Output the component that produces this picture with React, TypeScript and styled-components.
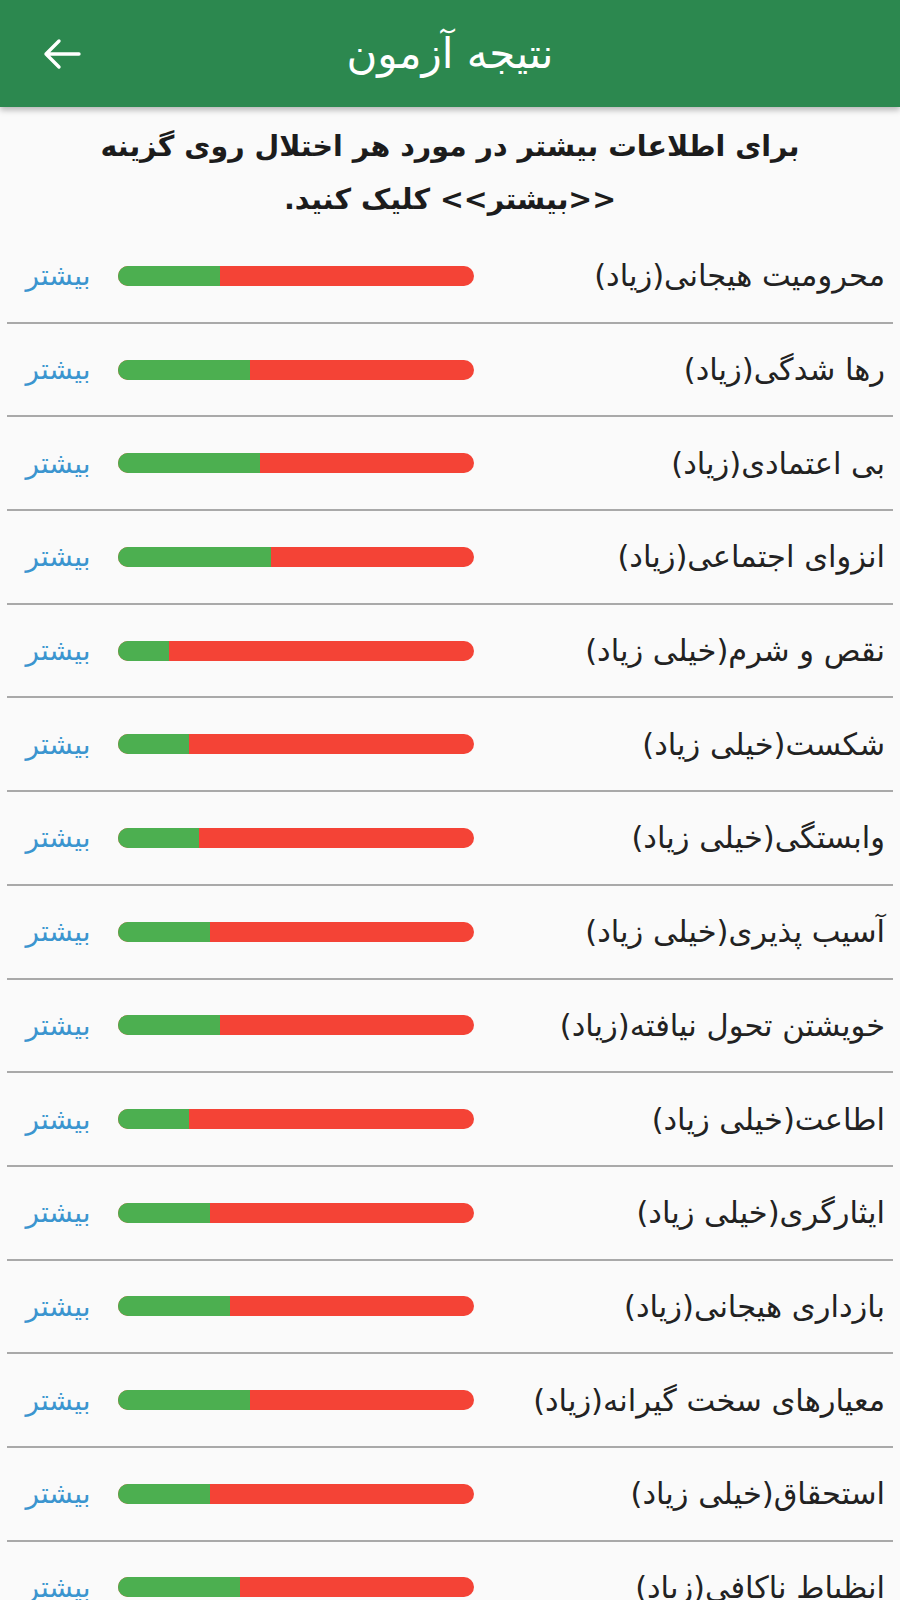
import React from 'react'
import styled, { createGlobalStyle } from 'styled-components'

const GlobalStyle = createGlobalStyle`
  html, body {
    margin: 0;
    padding: 0;
    background: #fafafa;
  }
  body {
    font-family: 'DejaVu Sans', 'Noto Sans', sans-serif;
  }
`

const Page = styled.div`
  width: 900px;
  min-height: 1600px;
  background: #fafafa;
  overflow: hidden;
`

const AppBar = styled.header`
  position: relative;
  z-index: 2;
  height: 107px;
  display: grid;
  grid-template-columns: 1fr auto 1fr;
  align-items: center;
  background: #2c884f;
  box-shadow: 0 3px 6px rgba(0, 0, 0, 0.28);
`

const BackButton = styled.button`
  justify-self: start;
  margin-left: 42px;
  padding: 0;
  border: none;
  background: transparent;
  display: flex;
  align-items: center;
  cursor: pointer;
`

const Title = styled.h1`
  margin: 0;
  color: #ffffff;
  font-size: 42px;
  font-weight: 400;
  direction: rtl;
`

const Intro = styled.p`
  margin: 0;
  padding: 13px 30px 4px;
  direction: rtl;
  text-align: center;
  font-size: 28.5px;
  font-weight: 700;
  line-height: 53px;
  color: #1c1c1c;
`

const List = styled.ul`
  list-style: none;
  margin: 0;
  padding: 0 7px;
`

const Row = styled.li`
  height: 91.7px;
  display: grid;
  grid-template-columns: 1fr 356px 70px;
  column-gap: 25px;
  align-items: center;
  direction: rtl;
  padding: 0 8px 0 16px;
  border-bottom: 2px solid #a9a9a9;
`

const Label = styled.span`
  font-size: 30.5px;
  color: #222222;
  white-space: nowrap;
  text-align: right;
`

const Bar = styled.div`
  direction: ltr;
  height: 20px;
  border-radius: 10px;
  background: #f44336;
  overflow: hidden;
  display: flex;
`

const Fill = styled.div`
  height: 100%;
  background: #4caf50;
`

const MoreLink = styled.a`
  font-size: 28px;
  color: #3b95cf;
  text-decoration: none;
  text-align: center;
  white-space: nowrap;
  cursor: pointer;
`

const items: { label: string; score: number }[] = [
  { label: 'محرومیت هیجانی(زیاد)', score: 10 },
  { label: 'رها شدگی(زیاد)', score: 13 },
  { label: 'بی اعتمادی(زیاد)', score: 14 },
  { label: 'انزوای اجتماعی(زیاد)', score: 15 },
  { label: 'نقص و شرم(خیلی زیاد)', score: 5 },
  { label: 'شکست(خیلی زیاد)', score: 7 },
  { label: 'وابستگی(خیلی زیاد)', score: 8 },
  { label: 'آسیب پذیری(خیلی زیاد)', score: 9 },
  { label: 'خویشتن تحول نیافته(زیاد)', score: 10 },
  { label: 'اطاعت(خیلی زیاد)', score: 7 },
  { label: 'ایثارگری(خیلی زیاد)', score: 9 },
  { label: 'بازداری هیجانی(زیاد)', score: 11 },
  { label: 'معیارهای سخت گیرانه(زیاد)', score: 13 },
  { label: 'استحقاق(خیلی زیاد)', score: 9 },
  { label: 'انظباط ناکافی(زیاد)', score: 12 },
]

const MAX_SCORE = 35

function BackArrow() {
  return (
    <svg width="40" height="32" viewBox="0 0 40 32" fill="none">
      <path
        d="M4 16H37M4 16L17 3M4 16L17 29"
        stroke="#ffffff"
        strokeWidth="3.4"
        strokeLinecap="round"
        strokeLinejoin="round"
      />
    </svg>
  )
}

export default function App() {
  return (
    <Page>
      <GlobalStyle />
      <AppBar>
        <BackButton aria-label="back">
          <BackArrow />
        </BackButton>
        <Title>نتیجه آزمون</Title>
        <span />
      </AppBar>
      <Intro>
        برای اطلاعات بیشتر در مورد هر اختلال روی گزینه
        <br />
        {'<<بیشتر>> کلیک کنید.'}
      </Intro>
      <List>
        {items.map((item) => (
          <Row key={item.label}>
            <Label>{item.label}</Label>
            <Bar>
              <Fill style={{ width: `${(item.score / MAX_SCORE) * 100}%` }} />
            </Bar>
            <MoreLink>بیشتر</MoreLink>
          </Row>
        ))}
      </List>
    </Page>
  )
}
